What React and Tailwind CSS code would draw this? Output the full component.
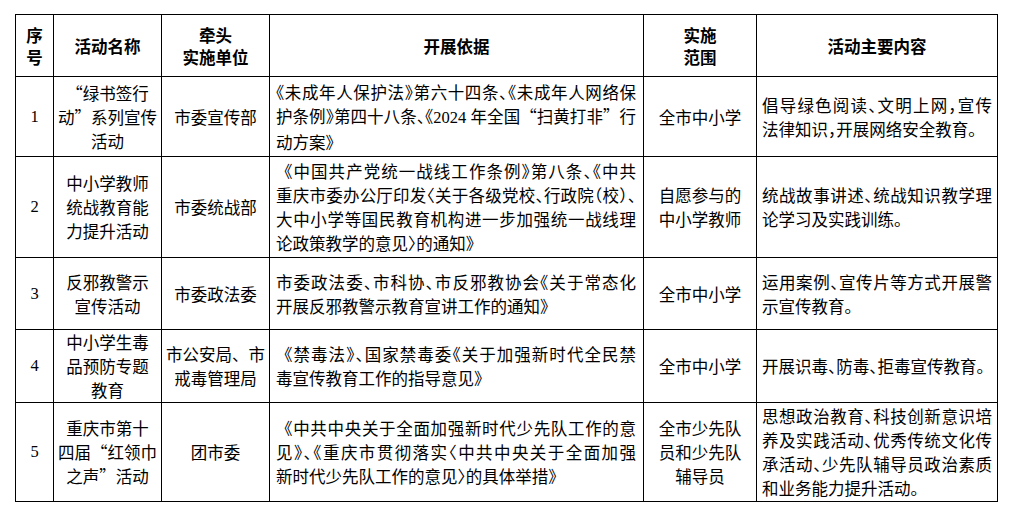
import React from "react";

const FW = ({ children }) => (
  <span className="[font-feature-settings:'fwid']">{children}</span>
);
const N = ({ children }) => (
  <span className="font-['Liberation_Serif',serif]">{children}</span>
);

const rows = [
  {
    h: "h-[79px]",
    no: "1",
    name: [
      <>
        <FW>“</FW>绿书签行
      </>,
      <>
        动<FW>”</FW>系列宣传
      </>,
      "活动",
    ],
    org: ["市委宣传部"],
    basis: [
      "《未成年人保护法》第六十四条、《未成年人网络保",
      <>
        护条例》第四十八条、《<N>2024 </N>年全国<FW>“</FW>扫黄打非<FW>”</FW>行
      </>,
      "动方案》",
    ],
    scope: ["全市中小学"],
    content: ["倡导绿色阅读、文明上网，宣传", "法律知识，开展网络安全教育。"],
  },
  {
    h: "h-[100px]",
    no: "2",
    name: ["中小学教师", "统战教育能", "力提升活动"],
    org: ["市委统战部"],
    basis: [
      <>
        <FW>《</FW>中国共产党统一战线工作条例》第八条、《中共
      </>,
      "重庆市委办公厅印发〈关于各级党校、行政院（校）、",
      "大中小学等国民教育机构进一步加强统一战线理",
      "论政策教学的意见〉的通知》",
    ],
    scope: ["自愿参与的", "中小学教师"],
    content: ["统战故事讲述、统战知识教学理", "论学习及实践训练。"],
  },
  {
    h: "h-[71px]",
    no: "3",
    name: ["反邪教警示", "宣传活动"],
    org: ["市委政法委"],
    basis: [
      "市委政法委、市科协、市反邪教协会《关于常态化",
      "开展反邪教警示教育宣讲工作的通知》",
    ],
    scope: ["全市中小学"],
    content: ["运用案例、宣传片等方式开展警", "示宣传教育。"],
  },
  {
    h: "h-[72px]",
    no: "4",
    name: ["中小学生毒", "品预防专题", "教育"],
    org: ["市公安局、市", "戒毒管理局"],
    basis: [
      <>
        <FW>《</FW>禁毒法》、国家禁毒委《关于加强新时代全民禁
      </>,
      "毒宣传教育工作的指导意见》",
    ],
    scope: ["全市中小学"],
    content: ["开展识毒、防毒、拒毒宣传教育。"],
  },
  {
    h: "h-[98px]",
    no: "5",
    name: [
      "重庆市第十",
      <>
        四届<FW>“</FW>红领巾
      </>,
      <>
        之声<FW>”</FW>活动
      </>,
    ],
    org: ["团市委"],
    basis: [
      <>
        <FW>《</FW>中共中央关于全面加强新时代少先队工作的意
      </>,
      "见》、《重庆市贯彻落实〈中共中央关于全面加强",
      "新时代少先队工作的意见〉的具体举措》",
    ],
    scope: ["全市少先队", "员和少先队", "辅导员"],
    content: [
      "思想政治教育、科技创新意识培",
      "养及实践活动、优秀传统文化传",
      "承活动、少先队辅导员政治素质",
      "和业务能力提升活动。",
    ],
  },
];

function Center({ lines, h }) {
  return (
    <div className={`bg-white flex items-center justify-center text-center ${h}`}>
      <div>
        {lines.map((l, i) => (
          <div key={i} className="whitespace-nowrap">
            {l}
          </div>
        ))}
      </div>
    </div>
  );
}

function Just({ lines, h, pad }) {
  return (
    <div className={`bg-white flex items-center ${pad} ${h}`}>
      <div className="w-full [font-feature-settings:'halt'] [text-spacing-trim:space-all]">
        {lines.map((l, i) => (
          <div
            key={i}
            className={
              i < lines.length - 1
                ? "text-justify [text-align-last:justify]"
                : "text-left"
            }
          >
            {l}
          </div>
        ))}
      </div>
    </div>
  );
}

export default function App() {
  const head = "bg-white flex items-center justify-center text-center font-bold leading-[22px]";
  return (
    <div className="w-[1013px] h-[516px] bg-white pl-[15px] pt-[14px] font-['Noto_Sans_CJK_SC',sans-serif] text-[16.5px] leading-[24px] text-black">
      <div className="inline-grid grid-cols-[37px_107px_107px_373px_112px_240px] grid-rows-[61px_79px_100px_71px_72px_98px] gap-px p-px bg-black">
        <div className={head}>
          <div>序<br />号</div>
        </div>
        <div className={head}>活动名称</div>
        <div className={head}>
          <div>牵头<br />实施单位</div>
        </div>
        <div className={head}>开展依据</div>
        <div className={head}>
          <div>实施<br />范围</div>
        </div>
        <div className={head}>活动主要内容</div>

        {rows.map((r) => (
          <React.Fragment key={r.no}>
            <div className={`bg-white flex items-center justify-center ${r.h}`}>
              <N>{r.no}</N>
            </div>
            <Center lines={r.name} h={r.h} />
            <Center lines={r.org} h={r.h} />
            <Just lines={r.basis} h={r.h} pad="pl-[6px] pr-[7px]" />
            <Center lines={r.scope} h={r.h} />
            <Just lines={r.content} h={r.h} pad="pl-[5px] pr-[5px]" />
          </React.Fragment>
        ))}
      </div>
    </div>
  );
}
